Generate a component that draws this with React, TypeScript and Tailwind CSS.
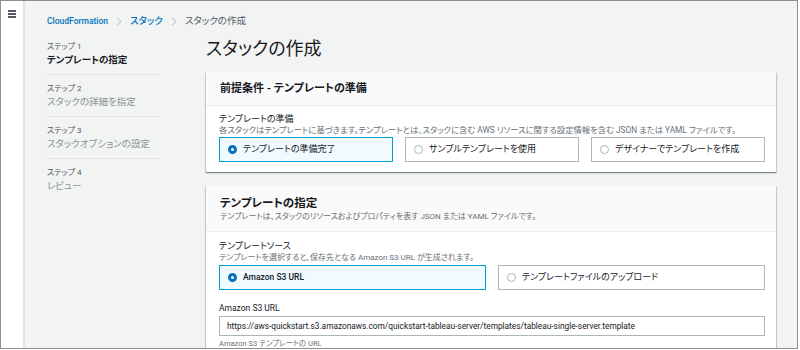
import React from "react";

const font = {
  fontFamily: 'Roboto, "Noto Sans CJK JP", sans-serif',
};

function Radio({ checked }: { checked: boolean }) {
  return checked ? (
    <span className="inline-block w-[9px] h-[9px] rounded-full border-[3px] border-[#0073bb] bg-white shrink-0" />
  ) : (
    <span className="inline-block w-[9px] h-[9px] rounded-full border border-[#aab7b8] bg-white shrink-0" />
  );
}

function Tile({ label, checked, latin }: { label: string; checked?: boolean; latin?: boolean }) {
  return (
    <div
      className={
        "flex-1 h-[25px] flex items-center gap-[6px] pl-[8px] border " +
        (checked ? "bg-[#f1faff] border-[#00a1c9]" : "bg-white border-[#aab7b8]")
      }
    >
      <Radio checked={!!checked} />
      <span
        className={
          (latin ? "text-[8.5px] font-medium " : "text-[9px] ") + "text-[#16191f] leading-none"
        }
      >
        {label}
      </span>
    </div>
  );
}

function Chevron() {
  return (
    <svg width="6" height="9" viewBox="0 0 6 9" className="mx-[8px]">
      <path d="M1 0.8 L5 4.5 L1 8.2" fill="none" stroke="#aab7b8" strokeWidth="1" />
    </svg>
  );
}

const Card = ({ children }: { children: React.ReactNode }) => (
  <div className="bg-white shadow-[0_1px_1px_0_rgba(0,28,36,0.3),1px_1px_1px_0_rgba(0,28,36,0.15),-1px_1px_1px_0_rgba(0,28,36,0.15)]">
    {children}
  </div>
);

const steps = [
  { s: "ステップ 1", t: "テンプレートの指定", active: true },
  { s: "ステップ 2", t: "スタックの詳細を指定" },
  { s: "ステップ 3", t: "スタックオプションの設定" },
  { s: "ステップ 4", t: "レビュー", last: true },
];

export default function App() {
  return (
    <div
      style={font}
      className="w-[798px] h-[349px] border border-[#8f8f8f] flex overflow-hidden [font-feature-settings:'palt'] bg-[#f2f3f3]"
    >
      <div className="w-[24px] shrink-0 bg-white border-r-2 border-[#e1e4e4] flex justify-center pt-[9px]">
        <div className="flex flex-col gap-[1.5px] w-[8px] h-fit">
          <span className="h-[1.5px] bg-[#545b64]" />
          <span className="h-[1.5px] bg-[#545b64]" />
          <span className="h-[1.5px] bg-[#545b64]" />
        </div>
      </div>
      <div className="flex-1 pl-[22px] pt-[13px]">
        <div className="flex items-center h-[14px] leading-none">
          <span className="text-[8.5px] text-[#0073bb] font-medium">CloudFormation</span>
          <Chevron />
          <span className="text-[9.5px] text-[#0073bb] font-medium">スタック</span>
          <Chevron />
          <span className="text-[9.5px] text-[#545b64]">スタックの作成</span>
        </div>
        <div className="flex gap-[46px]">
          <div className="w-[113px] shrink-0 pt-[13px]">
            {steps.map((x) => (
              <div
                key={x.s}
                className={"pb-[8px] mb-[8px] " + (x.last ? "" : "border-b border-[#dfe3e3]")}
              >
                <div className="text-[8px] leading-[12px] text-[#545b64]">{x.s}</div>
                <div
                  className={
                    "text-[9.5px] leading-[13px] " +
                    (x.active ? "font-bold text-[#16191f]" : "text-[#879596]")
                  }
                >
                  {x.t}
                </div>
              </div>
            ))}
          </div>
          <div className="w-[570px] shrink-0">
            <h1 className="text-[18px] leading-[24px] text-[#16191f] mt-[9px] mb-[11px] font-normal">
              スタックの作成
            </h1>
            <Card>
              <div className="bg-[#fafafa] border-b border-[#eaeded] h-[34px] flex items-center pl-[14px]">
                <span className="text-[11px] font-bold text-[#16191f] leading-none">
                  前提条件 - テンプレートの準備
                </span>
              </div>
              <div className="pl-[13px] pr-[11px] pt-[7px] pb-[10px]">
                <div className="text-[9px] leading-[12px] text-[#16191f]">テンプレートの準備</div>
                <div className="text-[8.3px] leading-[10px] text-[#687078] whitespace-nowrap">
                  各スタックはテンプレートに基づきます。テンプレートとは、スタックに含む AWS リソースに関する設定情報を含む JSON または YAML ファイルです。
                </div>
                <div className="flex gap-[12px] mt-[2px]">
                  <Tile label="テンプレートの準備完了" checked />
                  <Tile label="サンプルテンプレートを使用" />
                  <Tile label="デザイナーでテンプレートを作成" />
                </div>
              </div>
            </Card>
            <div className="h-[14px]" />
            <Card>
              <div className="bg-[#fafafa] border-b border-[#eaeded] h-[46px] flex flex-col pt-[10px] pl-[14px]">
                <span className="text-[11.5px] font-bold text-[#16191f] leading-[14px]">
                  テンプレートの指定
                </span>
                <span className="text-[8px] text-[#687078] leading-[12px] mt-[1px]">
                  テンプレートは、スタックのリソースおよびプロパティを表す JSON または YAML ファイルです。
                </span>
              </div>
              <div className="pl-[13px] pr-[11px] pt-[8px] pb-[10px]">
                <div className="text-[9px] leading-[12px] text-[#16191f]">テンプレートソース</div>
                <div className="text-[8px] leading-[10px] text-[#687078] mt-[1px]">
                  テンプレートを選択すると、保存先となる Amazon S3 URL が生成されます。
                </div>
                <div className="flex gap-[12px] mt-[2px]">
                  <Tile label="Amazon S3 URL" checked latin />
                  <Tile label="テンプレートファイルのアップロード" />
                </div>
                <div className="text-[8.5px] leading-[12px] text-[#16191f] mt-[12px]">Amazon S3 URL</div>
                <div className="mt-[2px] h-[20px] border border-[#aab7b8] flex items-center px-[7px] text-[8.3px] text-[#16191f] whitespace-nowrap">
                  https://aws-quickstart.s3.amazonaws.com/quickstart-tableau-server/templates/tableau-single-server.template
                </div>
                <div className="text-[7.5px] leading-[10px] text-[#687078] mt-[3px]">
                  Amazon S3 テンプレートの URL
                </div>
              </div>
            </Card>
          </div>
        </div>
      </div>
    </div>
  );
}
